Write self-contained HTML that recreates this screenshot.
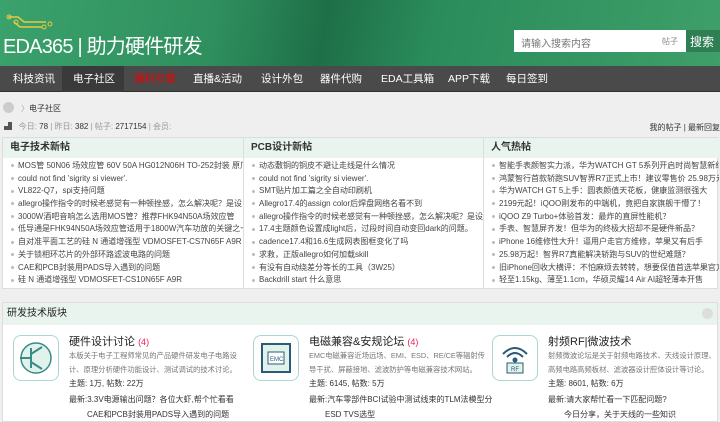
<!DOCTYPE html><html><head><meta charset="utf-8"><style>
*{margin:0;padding:0;box-sizing:border-box}
body{width:720px;height:418px;overflow:hidden;font-family:"Liberation Sans","Noto Sans CJK SC",sans-serif;background:#efefef;position:relative;font-size:9px;color:#333}
.hd{position:absolute;left:0;top:0;width:720px;height:66px;background:linear-gradient(100deg,#3aa26c 0%,#2f8f5e 30%,#1e6f47 45%,#2a8c5b 60%,#3f9f6a 100%)}
.logo{position:absolute;left:3px;top:30px;color:#fff;font-size:20px;letter-spacing:-0.8px}
.srch{position:absolute;left:514px;top:30px;width:172px;height:22px;background:#fff;font-size:10px;color:#777;padding:5px 7px}
.srch span{position:absolute;right:8px;top:6px;font-size:8px;color:#888}
.sbtn{position:absolute;left:686px;top:30px;width:34px;height:22px;background:#2f7e54;color:#fff;font-size:12px;padding:3px 4px}
.nav{position:absolute;left:0;top:66px;width:720px;height:26px;background:#4a4a4a;border-bottom:1px solid #2f2f2f}
.nav div{position:absolute;top:0;height:26px;line-height:26px;color:#fff;font-size:10.5px}
.box{position:absolute;left:2px;top:137px;width:716px;height:152px;background:#fff;border:1px solid #ddd}
.col{position:absolute;top:0;height:150px;border-right:1px solid #ddd}
.col h3{height:20px;background:#e9f4ee;font-size:10px;line-height:20px;padding-left:7px;font-weight:bold;color:#333}
.col ul{list-style:none;padding:2px 0 0 8px}
.col li{font-size:8px;line-height:12.7px;height:12.7px;color:#444;white-space:nowrap;overflow:hidden}
.col li:before{content:"";display:inline-block;width:3px;height:3px;background:#bbb;border-radius:50%;margin-right:4px;vertical-align:middle}
.sec{position:absolute;left:2px;top:302px;width:716px;height:120px;background:#fff;border:1px solid #ddd}
.sec h3{height:22px;background:#e9f4ee;font-size:10px;line-height:22px;padding-left:4px;font-weight:normal;color:#222}
.f{position:absolute;top:32px}
.ic{position:absolute;left:0;top:0;width:46px;height:46px;border:1px solid #aad5d5;border-radius:8px;background:#fff}
.ft{position:absolute;left:56px;top:-2px;font-size:11px;white-space:nowrap;color:#222}
.ft span{color:#e25;font-size:9px}
.fd{position:absolute;left:56px;top:14px;font-size:7.3px;line-height:14px;color:#777;white-space:nowrap}
.fs{position:absolute;left:56px;top:43px;font-size:8px;white-space:nowrap}
.fl{position:absolute;left:56px;top:59px;font-size:8px;white-space:nowrap}
.fl2{position:absolute;left:74px;top:74px;font-size:8px;white-space:nowrap}
</style></head><body>
<div class="hd">
<svg style="position:absolute;left:6px;top:14px" width="60" height="16"><path d="M2 3 H12 L18 8 H40" stroke="#e8c840" stroke-width="1.5" fill="none"/><path d="M8 8 L14 13 H36" stroke="#e8c840" stroke-width="1.5" fill="none"/><circle cx="3" cy="3" r="2" fill="none" stroke="#e8c840"/><circle cx="10" cy="8" r="2" fill="none" stroke="#e8c840"/><circle cx="38" cy="13" r="2" fill="none" stroke="#e8c840"/><circle cx="44" cy="10" r="2" fill="none" stroke="#e8c840"/></svg>
<div class="logo">EDA365 | 助力硬件研发</div>
<div class="srch">请输入搜索内容<span>帖子</span></div>
<div class="sbtn">搜索</div>
</div>
<div class="nav">
<div style="left:13px">科技资讯</div>
<div style="left:62px;width:62px;background:#3a3a3a;padding-left:11px">电子社区</div>
<div style="left:134px;color:#e00">爆料引擎</div>
<div style="left:193px">直播&amp;活动</div>
<div style="left:261px">设计外包</div>
<div style="left:320px">器件代购</div>
<div style="left:381px">EDA工具箱</div>
<div style="left:448px">APP下载</div>
<div style="left:506px">每日签到</div>
</div>
<div style="position:absolute;left:3px;top:102px;width:11px;height:11px;border-radius:50%;background:#ccc"></div>
<div style="position:absolute;left:21px;top:103px;font-size:8px;color:#aaa">〉<span style="color:#333">电子社区</span></div>
<div style="position:absolute;left:4px;top:121px;font-size:8px;color:#999;white-space:nowrap"><b style="color:#555">▟</b>&nbsp;&nbsp; 今日: <span style="color:#333">78</span> | 昨日: <span style="color:#333">382</span> | 帖子: <span style="color:#333">2717154</span> | 会员:</div>
<div style="position:absolute;right:0;top:122px;font-size:8px;color:#333">我的帖子 | 最新回复</div>
<div class="box">
<div class="col" style="left:0;width:241px"><h3>电子技术新帖</h3><ul>
<li>MOS管 50N06 场效应管 60V 50A HG012N06H TO-252封装 原厂</li><li>could not find 'sigrity si viewer'.</li><li>VL822-Q7，spi支持问题</li><li>allegro操作指令的时候老感觉有一种顿挫感，怎么解决呢？是设</li><li>3000W酒吧音响怎么选用MOS管？推荐FHK94N50A场效应管</li><li>低导通是FHK94N50A场效应管适用于1800W汽车功放的关键之一</li><li>自对准平面工艺的硅 N 通道增强型 VDMOSFET-CS7N65F A9R</li><li>关于锁相环芯片的外部环路滤波电路的问题</li><li>CAE和PCB封装用PADS导入遇到的问题</li><li>硅 N 通道增强型 VDMOSFET-CS10N65F A9R</li></ul></div>
<div class="col" style="left:241px;width:240px"><h3>PCB设计新帖</h3><ul>
<li>动态敷铜的铜皮不避让走线是什么情况</li><li>could not find 'sigrity si viewer'.</li><li>SMT贴片加工篇之全自动印刷机</li><li>Allegro17.4的assign color后焊盘网络名看不到</li><li>allegro操作指令的时候老感觉有一种顿挫感，怎么解决呢？是设置</li><li>17.4主题颜色设置成light后，过段时间自动变回dark的问题。</li><li>cadence17.4和16.6生成网表图框变化了吗</li><li>求救，正版allegro如何加载skill</li><li>有没有自动绕差分等长的工具（3W25）</li><li>Backdrill start 什么意思</li></ul></div>
<div class="col" style="left:481px;width:235px;border:none"><h3>人气热帖</h3><ul>
<li>智能手表颜智实力派，华为WATCH GT 5系列开启时尚智慧新纪元</li><li>鸿蒙智行首款轿跑SUV智界R7正式上市！建议零售价 25.98万元起</li><li>华为WATCH GT 5上手：圆表颜值天花板，健康监测很强大</li><li>2199元起！iQOO刚发布的中端机，竟把自家旗舰干懵了！</li><li>iQOO Z9 Turbo+体验首发：最炸的直屏性能机？</li><li>手表、智慧屏齐发！但华为的终极大招却不是硬件新品？</li><li>iPhone 16维修性大升！逼用户走官方维修，苹果又有后手</li><li>25.98万起！智界R7真能解决轿跑与SUV的世纪难题？</li><li>旧iPhone回收大横评：不怕麻烦去转转，想要保值首选苹果官方</li><li>轻至1.15kg、薄至1.1cm，华硕灵耀14 Air AI超轻薄本开售</li></ul></div>
</div>
<div class="sec"><h3>研发技术版块</h3>
<div style="position:absolute;right:4px;top:5px;width:11px;height:11px;border-radius:50%;background:#ddd"></div>
<div class="f" style="left:10px"><div class="ic"><svg width="44" height="44"><circle cx="22" cy="22" r="15" fill="#dff3ea" stroke="#3a8a8a" stroke-width="1.5"/><path d="M17 12V32M6 22H17M17 18L28 11M17 26L28 33" stroke="#3a8a8a" stroke-width="2" fill="none"/></svg></div>
<div class="ft">硬件设计讨论 <span>(4)</span></div><div class="fd">本版关于电子工程师常见的产品硬件研发电子电路设<br>计、原理分析硬件功能设计、测试调试的技术讨论。</div><div class="fs">主题: 1万, 帖数: 22万</div><div class="fl">最新:3.3V电源输出问题？各位大虾,帮个忙看看</div><div class="fl2">CAE和PCB封装用PADS导入遇到的问题</div></div>
<div class="f" style="left:250px"><div class="ic"><svg width="44" height="44"><rect x="8" y="8" width="28" height="28" fill="#dff3ea" stroke="#2b5a7a" stroke-width="2"/><rect x="14" y="16" width="16" height="12" fill="#fff" stroke="#2b5a7a"/><text x="16" y="25" font-size="6" fill="#2b5a7a">EMC</text></svg></div>
<div class="ft">电磁兼容&amp;安规论坛 <span>(4)</span></div><div class="fd">EMC电磁兼容近场远场、EMI、ESD、RE/CE等辐射传<br>导干扰、屏蔽接地、滤波防护等电磁兼容技术网站。</div><div class="fs">主题: 6145, 帖数: 5万</div><div class="fl">最新:汽车零部件BCI试验中测试线束的TLM法模型分</div><div class="fl2" style="left:72px">ESD TVS选型</div></div>
<div class="f" style="left:489px"><div class="ic"><svg width="44" height="44"><path d="M10 18Q22 6 34 18M14 21Q22 13 30 21" stroke="#2b5a7a" stroke-width="2" fill="none"/><circle cx="22" cy="24" r="2.5" fill="#2b5a7a"/><rect x="14" y="27" width="16" height="10" fill="#dff3ea" stroke="#2b5a7a"/><text x="18" y="35" font-size="6" fill="#2b5a7a">RF</text></svg></div>
<div class="ft">射频RF|微波技术</div><div class="fd">射频微波论坛是关于射频电路技术、天线设计原理、<br>高频电路高频板材、滤波器设计腔体设计等讨论。</div><div class="fs">主题: 8601, 帖数: 6万</div><div class="fl">最新:请大家帮忙看一下匹配问题?</div><div class="fl2" style="left:72px">今日分享，关于天线的一些知识</div></div>
</div>
</body></html>
